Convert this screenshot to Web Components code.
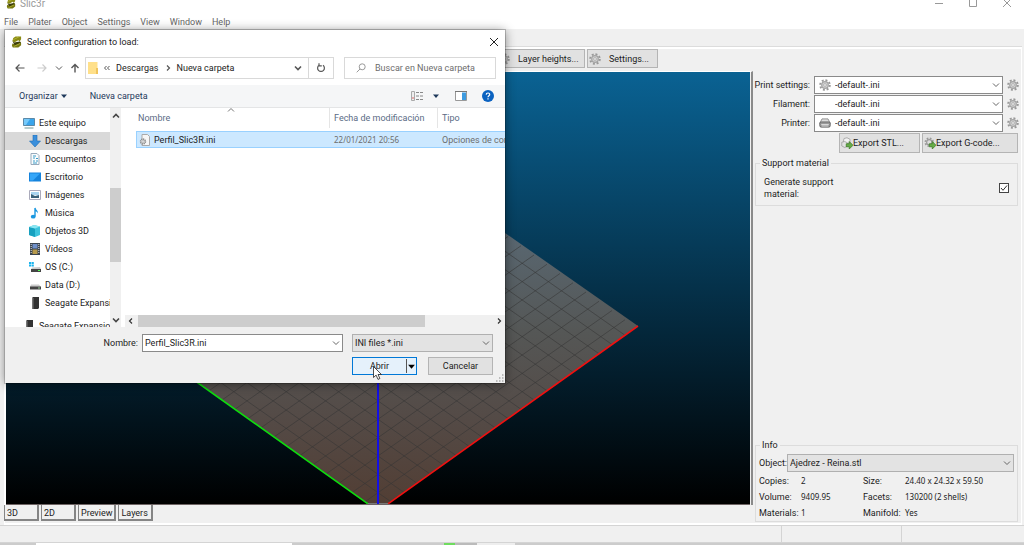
<!DOCTYPE html>
<html lang="es">
<head>
<meta charset="utf-8">
<title>Slic3r</title>
<style>
  body { margin: 0; background: #f0f0f0; font: 9px/12px Roboto, "Liberation Sans", sans-serif; color: #1c1c1c; }
</style>
</head>
<body>
<slicer-app></slicer-app>
<script>
const ICONS = {
  logo: ['0 0 12 12', '<path d="M2.500 1.500 5 0h6v3L9.500 5.500 8 4 3.500 6.500 1.500 5z" fill="#8a8b14"/><path d="M10 5.500 11 7v2.500L8 12H2l-1-2 .5-2.500L4 8.500z" fill="#77780f"/><path d="M1.500 5 3.500 6.500l6-1L11 7 4 9.500z" fill="#3e3f0a"/><path d="m2.500 3.500 6-3M3 11l7-3.500" stroke="#b9ba3c" stroke-width=".9" fill="none"/>'],
  gear: ['0 0 16 16', '<circle cx="8" cy="8" r="6.400" fill="none" stroke="#999" stroke-width="2.600" stroke-dasharray="2.600 2.400"/><circle cx="8" cy="8" r="4.400" fill="#cfcfcf" stroke="#a4a4a4" stroke-width="1.600"/><circle cx="8" cy="8" r="1.800" fill="#f4f4f4" stroke="#999" stroke-width=".8"/>'],
  printer: ['0 0 16 16', '<path d="M4 2.500h8l3 6H1z" fill="#ddd" stroke="#777"/><rect x="1" y="6.500" width="14" height="7" rx="2" fill="#999" stroke="#555"/><path d="M3 10h10M3.500 12h9" stroke="#eee"/>'],
  stl: ['0 0 16 16', '<path d="m4 2 4-1 4 2v4l-4 2-5-2z" fill="#f2f2f2" stroke="#999"/><path d="m1 7 4-1 4 2v4l-4 2-4-2z" fill="#e2e2e2" stroke="#999"/><path d="M7 9h4V6l5 5-5 5v-3H7z" fill="#66ad48" stroke="#3b7a25"/>'],
  gcode: ['0 0 16 16', '<circle cx="7" cy="7" r="5.200" fill="none" stroke="#999" stroke-width="2.400" stroke-dasharray="2.200 1.900"/><circle cx="7" cy="7" r="3.500" fill="#ddd" stroke="#999" stroke-width="1.500"/><path d="M7 9h4V6l5 5-5 5v-3H7z" fill="#66ad48" stroke="#3b7a25"/>'],
  check: ['0 0 10 10', '<path d="m2 5 2 2.300L8 2.500" fill="none" stroke="#333"/>'],
  chevron: ['0 0 8 8', '<path d="m1 2.500 3 3 3-3" fill="none" stroke="currentColor"/>'],
  bold: ['0 0 8 8', '<path d="m1 2.500 3 3 3-3" fill="none" stroke="currentColor" stroke-width="1.600"/>'],
  right: ['0 0 8 8', '<path d="m3 1.500 2.500 2.500L3 6.500" fill="none" stroke="currentColor" stroke-width="1.200"/>'],
  rewind: ['0 0 8 8', '<path d="M3.500 2 1.500 4l2 2M6.500 2l-2 2 2 2" fill="none" stroke="currentColor"/>'],
  tri: ['0 0 8 8', '<path d="M1 2.500h6L4 6z" fill="currentColor"/>'],
  back: ['0 0 10 10', '<path d="M9.500 5H1M4.500 1.500 1 5l3.500 3.500" fill="none" stroke="currentColor" stroke-width="1.200"/>'],
  fwd: ['0 0 10 10', '<path d="M.5 5H9M5.500 1.500 9 5 5.500 8.500" fill="none" stroke="currentColor" stroke-width="1.200"/>'],
  up: ['0 0 10 10', '<path d="M5 9.500V1.500M1.500 5 5 1.500 8.500 5" fill="none" stroke="currentColor" stroke-width="1.400"/>'],
  refresh: ['0 0 10 10', '<path d="M3 2.300a3.400 3.400 0 1 0 4 0M3 .3v2.500h2.800" fill="none" stroke="currentColor" stroke-width="1.200"/>'],
  search: ['0 0 10 10', '<circle cx="6.200" cy="3.800" r="3" fill="none" stroke="currentColor"/><path d="M4 6 .7 9.300" stroke="currentColor"/>'],
  folder: ['0 0 10 12', '<path d="M0 0h9.500v12H0z" fill="#ffe08a"/><path d="M8 6h2v6H8z" fill="#f0c45c"/>'],
  view: ['0 0 13 10', '<path d="M.5.5h3v9h-3z" fill="#eee" stroke="#aaa"/><path d="M1 7h2" stroke="#d66"/><path d="M5 1.500h3M9 1.500h3M5 5h3M9 5h3M5 8.500h3M9 8.500h3" stroke="#888"/>'],
  pane: ['0 0 12 10', '<path d="M.5.5h11v9H.5z" fill="#fff" stroke="#999"/><path d="M0 .5h12" stroke="#777"/><path d="M7 1.500h4V9H7z" fill="#3d9be0"/>'],
  help: ['0 0 12 12', '<circle cx="6" cy="6" r="6" fill="#0b62c0"/><path d="M4.200 4.600C4.300 2.400 7.800 2.500 7.700 4.600 7.600 5.800 6 5.800 6 7.300M6 8.300v1.300" fill="none" stroke="#fff" stroke-width="1.200"/>'],
  close: ['0 0 10 10', '<path d="m1 1 8 8M9 1 1 9" stroke="currentColor" fill="none"/>'],
  min: ['0 0 10 10', '<path d="M1 5.500h8" stroke="currentColor"/>'],
  max: ['0 0 10 10', '<path d="M1.500 1.500h7v7h-7z" stroke="currentColor" fill="none"/>'],
  pc: ['0 0 12 12', '<path d="M.5 1.500h11v7H.5z" fill="#39a5ec" stroke="#5b89a8"/><path d="M1 2h6L3 8H1z" fill="#75c9fa"/><path d="M1.500 11h9" stroke="#8aa" stroke-width="1.200"/>'],
  down: ['0 0 12 12', '<path d="M4 0h4v6h3.500L6 12 .5 6H4z" fill="#3a8fdc" stroke="#1f6db5" stroke-width=".6"/>'],
  doc: ['0 0 12 12', '<path d="M2 .5h6l2 2v9H2z" fill="#fafcfd" stroke="#9ab"/><path d="M4 3h3M4 5h2M7 5.500h2M4 8h2M7 8h2M4 10h4" stroke="#3a9cc8"/>'],
  desk: ['0 0 12 12', '<path d="M0 1.500h12v9H0z" fill="#1583dc"/><path d="M1 2.500h10L4 9.500H1z" fill="#35a6f8"/>'],
  img: ['0 0 12 12', '<path d="M.5 1.500h11v9H.5z" fill="#fff" stroke="#aab"/><path d="M2 3h8v3H2z" fill="#a8d5f0"/><path d="m2 5 4 2 4-1v3H2z" fill="#39627a"/>'],
  music: ['0 0 12 12', '<path d="M6 1v8.500" stroke="#1b98e0" stroke-width="1.400"/><ellipse cx="4.200" cy="9.700" rx="2.400" ry="1.900" fill="#1b98e0"/><path d="M6 0c.5 3 3.500 3 2.800 6.500C8.500 5 7 4.500 6 4.300z" fill="#1b98e0"/>'],
  cube: ['0 0 12 12', '<path d="m0 2 5-2 6 1.500V10l-5 2-6-2z" fill="#3cc3dc"/><path d="m0 2 6 1.500V12l-6-2z" fill="#17a0bf"/><path d="m0 2 5-2 6 1.500-5 2z" fill="#8be6f2"/>'],
  video: ['0 0 12 12', '<path d="M1 0h10v12H1z" fill="#3b4450"/><path d="M3.500 1h5v4.500h-5z" fill="#6f8fc9"/><path d="M3.500 6.500h5V11h-5z" fill="#b79a4c"/><path d="M2.200 1v10M9.800 1v10" stroke="#ddd" stroke-dasharray="1 1"/>'],
  os: ['0 0 12 12', '<path d="M0 1h2v2H0zM2.500 1h2.300v2H2.500zM0 3.500h2v2H0zM2.500 3.500h2.300v2H2.500z" fill="#1ab4ee"/><path d="m3 6.500 8-.5 1 2.500H2z" fill="#ccc"/><path d="M2 8h10v3H2z" fill="#444"/><path d="M9 9.500h2" stroke="#5f5"/>'],
  drive: ['0 0 12 12', '<path d="m2 5.500 8 0 2 2.500H1z" fill="#ccc"/><path d="M1 7.500h11v3H1z" fill="#444"/><path d="M9 9h2" stroke="#9c9"/>'],
  hdd: ['0 0 12 12', '<path d="m3 1 1-1h6v11l-1 1H3z" fill="#333"/><path d="M3 1h1.500v11H3z" fill="#777"/>'],
  ini: ['0 0 12 12', '<path d="M3 .5h5.500l2 2v9H3z" fill="#f6f6f6" stroke="#aaa"/><circle cx="4" cy="7.500" r="2.500" fill="#ddd" stroke="#888" stroke-width="1.400" stroke-dasharray="1.300 .6"/><circle cx="4" cy="7.500" r="1" fill="#fff" stroke="#888" stroke-width=".5"/>'],
  grip: ['0 0 8 8', '<path d="M6 1h1.500M6 4h1.500M6 7h1.500M3 4h1.500M3 7h1.500M0 7h1.500" stroke="#aaa" stroke-width="1.500"/>'],
  cursor: ['0 0 9 14', '<path d="M.5.500v11l2.600-2.400 1.900 4.300 1.900-.9L5 8.500h3.500z" fill="#fff" stroke="#222" stroke-width=".8"/>']
};

function define(name, css, html, setup) {
  const template = document.createElement('template');
  template.innerHTML = `<style>*{box-sizing:border-box}button,select,input{font:inherit;color:inherit;margin:0;padding:0;border-radius:0}button{cursor:default}${css}</style>${html}`;
  customElements.define(name, class extends HTMLElement {
    connectedCallback() {
      if (this.shadowRoot) return;
      this.attachShadow({ mode: 'open' }).append(template.content.cloneNode(true));
      if (setup) setup(this, this.shadowRoot);
    }
  });
}

define('ui-icon', ':host{display:inline-flex;flex:none;width:12px;height:12px}svg{width:100%;height:100%}', '<svg aria-hidden="true"></svg>', (el, root) => {
  const [box, body] = ICONS[el.getAttribute('name')];
  const svg = root.querySelector('svg');
  svg.setAttribute('viewBox', box);
  svg.innerHTML = body;
});

/* Drop-down with an optional leading icon; its value is the single option. */
define('combo-box', `
  :host{display:grid;min-width:0;height:18px;background:var(--face,#fff);border:1px solid var(--edge,#8a8a8a);align-items:center}
  select,.deco{grid-area:1/1}
  select{appearance:none;border:0;background:none;width:100%;height:16px;padding-left:var(--inset,2px);outline:0}
  .deco{display:flex;justify-content:space-between;align-items:center;padding:0 2px 0 4px;pointer-events:none;color:#666}
  ui-icon{width:8px;height:8px}`,
  '<select><option></option></select><span class="deco"><slot></slot><ui-icon name="chevron"></ui-icon></span>',
  (el, root) => {
    root.querySelector('option').textContent = el.getAttribute('value');
    root.querySelector('select').setAttribute('aria-label', el.getAttribute('label'));
  });

define('push-button', `
  :host{display:block;height:20px}
  button{width:100%;height:100%;display:flex;align-items:center;justify-content:var(--pack,center);gap:var(--gap,0);padding:0 1px;background:#e1e1e1;border:1px solid #b4b4b4}`,
  '<button type="button"><slot name="icon"></slot><slot></slot></button>');

define('title-bar', `
  :host{display:flex;height:14px;background:#fff;color:#999;padding:0 12px 0 6px;font-size:10px}
  .name{display:flex;gap:4px;flex:1;margin-top:-2px}
  .name ui-icon{width:10px;height:11px}
  .controls{display:flex;gap:24px;margin-top:-2px}
  button{border:0;background:none;height:10px;width:10px;display:flex}
  button ui-icon{width:10px;height:10px}`,
  `<span class="name"><ui-icon name="logo"></ui-icon>Slic3r</span>
   <span class="controls"><button aria-label="Minimizar"><ui-icon name="min"></ui-icon></button><button aria-label="Maximizar"><ui-icon name="max"></ui-icon></button><button aria-label="Cerrar"><ui-icon name="close"></ui-icon></button></span>`);

define('menu-bar', `
  :host{display:flex;gap:10px;height:15px;padding:2px 4px 0;background:#fff;color:#666}
  button{border:0;background:none;height:12px}`,
  ['File', 'Plater', 'Object', 'Settings', 'View', 'Window', 'Help'].map(t => `<button>${t}</button>`).join(''));

define('bed-view', `
  :host{display:block;flex:1;min-height:0;position:relative;overflow:hidden;background:linear-gradient(#0a6293,#000);border:solid #6e6464;border-width:0 0 1px}
  svg{position:absolute;inset:0;width:100%;height:100%}`,
  `<svg viewBox="0 0 744 432" preserveAspectRatio="xMidYMax slice" role="img" aria-label="3D">
    <defs><linearGradient id="bed" gradientUnits="userSpaceOnUse" x1="0" y1="72" x2="0" y2="432"><stop stop-color="#5d7486"/><stop offset=".3" stop-color="#58646c"/><stop offset=".52" stop-color="#555756"/><stop offset=".75" stop-color="#544b47"/><stop offset="1" stop-color="#523e34"/></linearGradient></defs>
    <path d="M112 254 372 72l260 182-260 185z" fill="url(#bed)"/>
    <path class="grid" stroke="#343434" stroke-opacity=".55" fill="none"/>
    <path d="M112 254 372 439" stroke="#0edc0e" stroke-width="1.600"/><path d="M632 254 372 439" stroke="#f01010" stroke-width="1.600"/>
    <path d="M362 432h20" stroke="#777" stroke-width="2"/>
    <path d="M372 180v252" stroke="#1410e6" stroke-width="2"/>
  </svg>`,
  (el, root) => {
    let d = '';
    for (let i = 1; i < 20; i++) {
      const t = i * 13;
      d += `M${112 + t} ${254 + t * 185 / 260}l260-182M${632 - t} ${254 + t * 185 / 260}l-260-182`;
    }
    root.querySelector('.grid').setAttribute('d', d);
  });

define('view-tabs', `
  :host{display:flex;align-items:flex-start;height:18px;gap:2px}
  button{border:solid #858585;border-width:0 2px 2px 1px;background:#f0f0f0;height:16px;text-align:left;padding:1px 2px 0;min-width:35px}
  button:first-child{height:18px;width:38px;padding-left:4px;border-width:0 1px 1px 0;margin-right:-2px}`,
  '<button>3D</button><button>2D</button><button>Preview</button><button>Layers</button>');

define('plater-view', `
  :host{display:flex;flex-direction:column;min-width:0}
  .tools{display:flex;gap:2px;height:22px;padding-left:491px;--gap:8px;--pack:flex-start}
  .tools push-button:first-child{width:89px}.tools push-button{width:71px;height:19px}
  .frame{flex:1;display:flex;border:solid;border-width:1px 2px 0 1px;border-color:#fff #8a8a8a #fff #fff;padding-right:1px}
  view-tabs{margin-left:-1px}`,
  `<div class="tools"><push-button><ui-icon slot="icon" name="gear"></ui-icon>Layer heights...</push-button><push-button><ui-icon slot="icon" name="gear"></ui-icon>Settings...</push-button></div>
   <div class="frame"><bed-view></bed-view></div><view-tabs></view-tabs>`);

define('group-box', `
  :host{display:block}
  fieldset{margin:0;min-width:0;border:1px solid #dcdcdc;padding:var(--pad,7px 8px 5px)}
  legend{padding:0 2px;margin-left:var(--legend,-4px);height:12px}`,
  '<fieldset><legend></legend><slot></slot></fieldset>',
  (el, root) => { root.querySelector('legend').textContent = el.getAttribute('caption'); });

define('settings-panel', `
  :host{display:flex;flex-direction:column;padding:27px 3px 1px 2px;min-width:0}
  .presets{display:grid;grid-template-columns:55px 1fr 12px;gap:1px 4px;align-items:center;text-align:right;margin-right:-1px;--inset:20px;white-space:nowrap}
  .presets>span{display:flex;justify-content:flex-end}
  .presets button{border:0;background:none;display:flex;height:12px}
  .export{display:flex;gap:2px;justify-content:flex-end;margin:1px 0 4px;--pack:flex-start}
  .export push-button{width:96px}.export push-button:first-child{width:81px}
  .support{display:flex;justify-content:space-between;align-items:center}
  .support span{width:80px}
  input{appearance:none;width:10px;height:10px;border:1px solid #444;background:#fff;display:block}
  .tick{display:grid}.tick>*{grid-area:1/1}.tick ui-icon{width:10px;height:10px;pointer-events:none}
  .grow{flex:1}
  .object{display:grid;grid-template-columns:28px 1fr;align-items:center;--face:#e3e3e3;--edge:#b0b0b0;margin-bottom:1px}
  table{width:100%;border-collapse:collapse;table-layout:fixed}
  th,td{padding:0;height:16px;font-weight:400;text-align:left;white-space:nowrap}
  td{font-family:"Noto Sans",sans-serif;font-size:8px}
  .info{--pad:3px 3px 0;--legend:1px}`,
  `<div class="presets">
     <span>Print settings:</span><combo-box value="-default-.ini" label="Print settings"><ui-icon name="gear"></ui-icon></combo-box><button aria-label="Print settings"><ui-icon name="gear"></ui-icon></button>
     <span>Filament:</span><combo-box value="-default-.ini" label="Filament"><i></i></combo-box><button aria-label="Filament"><ui-icon name="gear"></ui-icon></button>
     <span>Printer:</span><combo-box value="-default-.ini" label="Printer"><ui-icon name="printer"></ui-icon></combo-box><button aria-label="Printer"><ui-icon name="gear"></ui-icon></button>
   </div>
   <div class="export"><push-button><ui-icon slot="icon" name="stl"></ui-icon>Export STL...</push-button><push-button><ui-icon slot="icon" name="gcode"></ui-icon>Export G-code...</push-button></div>
   <group-box caption="Support material"><label class="support"><span>Generate support material:</span><b class="tick"><input type="checkbox" checked><ui-icon name="check"></ui-icon></b></label></group-box>
   <div class="grow"></div>
   <group-box class="info" caption="Info">
     <div class="object"><span>Object:</span><combo-box value="Ajedrez - Reina.stl" label="Object"><i></i></combo-box></div>
     <table><colgroup><col style="width:42px"><col style="width:62px"><col style="width:42px"><col></colgroup>
       <tr><th>Copies:</th><td>2</td><th>Size:</th><td>24.40 x 24.32 x 59.50</td></tr>
       <tr><th>Volume:</th><td>9409.95</td><th>Facets:</th><td>130200 (2 shells)</td></tr>
       <tr><th>Materials:</th><td>1</td><th>Manifold:</th><td>Yes</td></tr></table>
   </group-box>`);

define('status-bar', `
  :host{display:grid;grid-template-columns:1fr 120px 123px;height:18px;border:solid #d4d4d4;border-width:1px 0}
  span+span{border-left:1px solid #d4d4d4}`, '<span></span><span></span><span></span>');

define('address-bar', `
  :host{display:flex;align-items:center;height:22px;margin:3px 9px 6px 10px;color:#555}
  button{border:0;background:none;display:flex;align-items:center}
  ui-icon{width:10px;height:10px}ui-icon.s{width:8px;height:8px}
  .nav{display:flex;align-items:center;gap:7px;width:70px}
  .nav .off{color:#ccc;margin:0 1px 0 5px}
  .path{display:flex;flex:1;height:22px;border:1px solid #d9d9d9;color:#1c1c1c}
  .crumbs{flex:1;display:flex;align-items:center;gap:5px;padding:0 6px 0 2px}
  .crumbs>ui-icon:first-child{width:10px;height:12px}
  .crumbs .drop{margin-left:auto}
  .crumbs ui-icon,.reload{color:#555}
  .reload{border-left:1px solid #d9d9d9;width:25px;justify-content:center}
  .find{display:flex;align-items:center;gap:9px;width:152px;height:22px;margin-left:10px;padding-left:11px;border:1px solid #d9d9d9;color:#999}
  input{border:0;background:none;width:120px;outline:0}input::placeholder{color:#6d6d6d}`,
  `<span class="nav"><button aria-label="Atrás"><ui-icon name="back"></ui-icon></button><button class="off" aria-label="Adelante"><ui-icon name="fwd"></ui-icon></button><button class="hist" aria-label="Recientes"><ui-icon class="s" name="chevron"></ui-icon></button><button aria-label="Arriba"><ui-icon name="up"></ui-icon></button></span>
   <span class="path"><span class="crumbs"><ui-icon name="folder"></ui-icon><ui-icon class="s" name="rewind"></ui-icon><span>Descargas</span><ui-icon class="s" name="right"></ui-icon><span>Nueva carpeta</span><ui-icon class="s drop" name="bold"></ui-icon></span><button class="reload" aria-label="Actualizar"><ui-icon name="refresh"></ui-icon></button></span>
   <label class="find"><ui-icon name="search"></ui-icon><input type="search" placeholder="Buscar en Nueva carpeta" aria-label="Buscar"></label>`);

define('command-bar', `
  :host{display:flex;align-items:center;height:23px;padding:0 11px 0 14px;background:#f5f6f7;border-bottom:1px solid #e4e5e6;color:#1e395b}
  button{border:0;background:none;display:flex;align-items:center;gap:2px;height:14px}
  .s{width:8px;height:8px}.new{margin-left:22px;flex:1}
  .view{gap:8px;margin-right:15px}.view ui-icon:first-child{width:13px;height:10px}
  .pane{margin-right:15px}.pane ui-icon{height:10px}`,
  `<button>Organizar<ui-icon class="s" name="tri"></ui-icon></button><button class="new">Nueva carpeta</button>
   <button class="view" aria-label="Vista"><ui-icon name="view"></ui-icon><ui-icon class="s" name="tri"></ui-icon></button><button class="pane" aria-label="Panel"><ui-icon name="pane"></ui-icon></button><button aria-label="Ayuda"><ui-icon name="help"></ui-icon></button>`);

define('tree-item', `
  :host{display:flex;align-items:center;gap:4px;height:18px;padding-left:24px;white-space:nowrap}
  :host([root]){padding-left:18px}
  :host([selected]){background:#d9d9d9}`,
  '<slot name="icon"></slot><span><slot></slot></span>');

define('folder-tree', `
  :host{display:grid;grid-template-columns:1fr 11px;overflow:hidden;min-height:0}
  .list{overflow:hidden;padding-top:6px;min-height:0}
  .list tree-item:last-child{margin-top:5px}
  .bar{background:#f0f0f0;display:flex;flex-direction:column;align-items:center;color:#444;padding:4px 0 3px}
  .bar ui-icon{width:8px;height:8px}.bar ui-icon:first-child{transform:rotate(180deg)}
  .thumb{width:100%;height:74px;background:#cdcdcd;margin:68px 0 auto}`,
  `<div class="list">${[['pc', 'Este equipo', 'root'], ['down', 'Descargas', 'selected'], ['doc', 'Documentos'], ['desk', 'Escritorio'], ['img', 'Imágenes'], ['music', 'Música'], ['cube', 'Objetos 3D'], ['video', 'Vídeos'], ['os', 'OS (C:)'], ['drive', 'Data (D:)'], ['hdd', 'Seagate Expansion'], ['hdd', 'Seagate Expansion', 'root']]
    .map(([i, t, a = '']) => `<tree-item ${a}><ui-icon slot="icon" name="${i}"></ui-icon>${t}</tree-item>`).join('')}</div>
   <div class="bar"><ui-icon name="bold"></ui-icon><span class="thumb"></span><ui-icon name="bold"></ui-icon></div>`);

define('file-list', `
  :host{display:flex;flex-direction:column;min-width:0;overflow:hidden;position:relative}
  .rows{flex:1;padding-left:11px;overflow:hidden}
  table{width:100%;table-layout:fixed;border-collapse:separate;border-spacing:0}
  th{height:20px;font-weight:400;text-align:left;color:#5b6b85;padding:0 0 0 4px;border-right:1px solid #e5e5e5}
  th:first-child{padding-left:2px}th:last-child{border:0}
  thead tr:last-child td{height:3px;background:none;border:0}
  td{height:17px;padding:0 0 0 4px;white-space:nowrap;overflow:hidden;color:#6d6d6d;background:#cce8ff;border:solid #99d1ff;border-width:1px 0}
  td:first-child{border-left-width:1px;padding-left:2px;color:#1c1c1c}
  .num{font-family:"Noto Sans",sans-serif;font-size:8px}
  .file{display:flex;align-items:center;gap:3px}
  .sort{position:absolute;left:102px;top:-2px;width:8px;height:8px;transform:rotate(180deg);color:#777}
  .bar{height:12px;background:#f0f0f0;display:flex;align-items:center;color:#333;padding:0 2px}
  .bar ui-icon{width:8px;height:8px}.bar ui-icon:first-child{transform:rotate(180deg)}
  .thumb{width:287px;height:12px;background:#cdcdcd;margin:0 auto 0 3px}`,
  `<ui-icon class="sort" name="chevron"></ui-icon><div class="rows"><table><colgroup><col style="width:194px"><col style="width:108px"><col></colgroup>
     <thead><tr><th>Nombre</th><th>Fecha de modificación</th><th>Tipo</th></tr><tr><td colspan="3"></td></tr></thead>
     <tbody><tr><td><span class="file"><ui-icon name="ini"></ui-icon>Perfil_Slic3R.ini</span></td><td class="num">22/01/2021 20:56</td><td>Opciones de configuración</td></tr></tbody></table></div>
   <div class="bar"><ui-icon name="right"></ui-icon><span class="thumb"></span><ui-icon name="right"></ui-icon></div>`);

define('file-form', `
  :host{display:grid;grid-template-columns:1fr 201px 141px;grid-auto-rows:18px;align-content:start;gap:5px 9px;height:56px;padding:7px 12px 0 0;background:#f0f0f0;position:relative}
  label{display:flex;align-items:center;justify-content:flex-end;margin-right:-5px}
  .name{display:flex;align-items:center;height:18px;border:1px solid #8a8a8a;background:#fff;padding-right:2px;color:#666}
  .name input{flex:1;min-width:0;border:0;background:none;outline:0;padding-left:2px;color:#1c1c1c}
  .name ui-icon{width:8px;height:8px}
  .type{--face:#e3e3e3;--edge:#b0b0b0}
  .actions{grid-column:3;display:flex;justify-content:space-between}
  .open{display:flex;width:65px;height:18px;border:1px solid #0078d7;background:#e5f1fb}
  .open button{border:0;background:none;flex:1}
  .open .more{flex:none;width:10px;border-left:1px solid #555;height:14px;margin-top:1px;display:flex;align-items:center}
  .more ui-icon{width:9px;height:9px;color:#000}
  .cancel{width:65px;height:18px}
  .grip{position:absolute;right:1px;bottom:1px;width:8px;height:8px}`,
  `<label for="fn">Nombre:</label><span class="name"><input id="fn" value="Perfil_Slic3R.ini"><ui-icon name="chevron"></ui-icon></span>
   <combo-box class="type" value="INI files *.ini" label="Tipo de archivo"><i></i></combo-box>
   <span class="actions"><span class="open"><button>Abrir</button><button class="more" aria-label="Más"><ui-icon name="tri"></ui-icon></button></span><push-button class="cancel">Cancelar</push-button></span>
   <ui-icon class="grip" name="grip"></ui-icon>`);

define('file-dialog', `
  :host{display:flex;flex-direction:column;background:#fff;box-shadow:0 0 0 1px #0003,0 1px 10px #0007}
  header{display:flex;align-items:center;gap:5px;height:24px;padding:0 6px}
  header ui-icon{width:11px}header span{flex:1}
  header button{border:0;background:none;display:flex}header button ui-icon{width:10px;height:10px;color:#222}
  .body{flex:1;display:grid;grid-template-columns:116px 1fr;gap:4px;min-height:0}
  .pointer{position:absolute;left:368px;top:336px;width:9px;height:14px}`,
  `<header><ui-icon name="logo"></ui-icon><span>Select configuration to load:</span><button aria-label="Cerrar"><ui-icon name="close"></ui-icon></button></header>
   <address-bar></address-bar><command-bar></command-bar>
   <div class="body"><folder-tree></folder-tree><file-list></file-list></div>
   <file-form></file-form><ui-icon class="pointer" name="cursor"></ui-icon>`);

define('slicer-app', `
  :host{display:flex;flex-direction:column;min-height:100vh;position:relative}
  main{flex:1;display:grid;grid-template-columns:1fr 268px;margin:18px 2px 0 4px;border:solid #fff;border-width:2px 1px 2px 1px;box-shadow:0 -1px #dcdcdc}
  .task{height:2px;background:linear-gradient(90deg,#ccc 36px,#fff 36px 292px,#ccc 292px 444px,#6fdc5f 444px 455px,#bbb 455px 477px,#eee 477px 515px,#ccc 515px)}
  file-dialog{position:absolute;left:5px;top:30px;width:500px;height:353px}`,
  `<title-bar></title-bar><menu-bar></menu-bar><main><plater-view></plater-view><settings-panel></settings-panel></main><status-bar></status-bar><div class="task"></div><file-dialog></file-dialog>`);
</script>
</body>
</html>
